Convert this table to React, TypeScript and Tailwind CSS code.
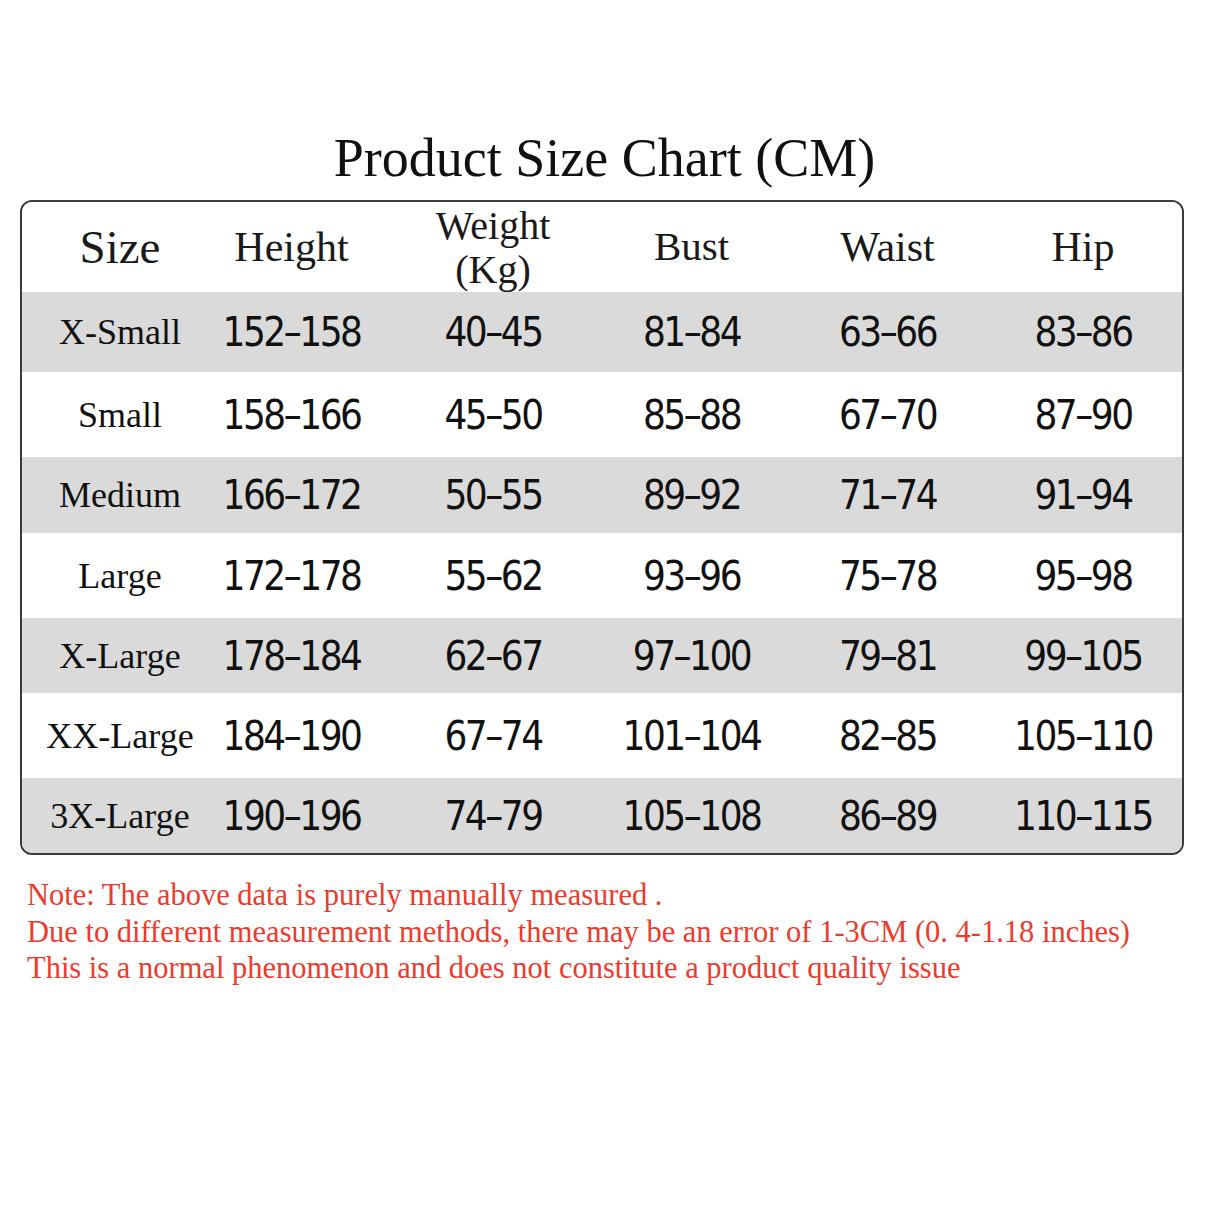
const rows = [
  { size: 'X-Small', h: '152–158', w: '40–45', b: '81–84', wa: '63–66', hip: '83–86', gray: true, height: 'h-[80px]' },
  { size: 'Small', h: '158–166', w: '45–50', b: '85–88', wa: '67–70', hip: '87–90', gray: false, height: 'h-[85px]' },
  { size: 'Medium', h: '166–172', w: '50–55', b: '89–92', wa: '71–74', hip: '91–94', gray: true, height: 'h-[76px]' },
  { size: 'Large', h: '172–178', w: '55–62', b: '93–96', wa: '75–78', hip: '95–98', gray: false, height: 'h-[85px]' },
  { size: 'X-Large', h: '178–184', w: '62–67', b: '97–100', wa: '79–81', hip: '99–105', gray: true, height: 'h-[75px]' },
  { size: 'XX-Large', h: '184–190', w: '67–74', b: '101–104', wa: '82–85', hip: '105–110', gray: false, height: 'h-[85px]' },
  { size: '3X-Large', h: '190–196', w: '74–79', b: '105–108', wa: '86–89', hip: '110–115', gray: true, height: 'h-[75px]' },
]

const serif = "font-['Liberation_Serif',serif]"
const num = "font-['DejaVu_Sans_Condensed','DejaVu_Sans',sans-serif] [font-stretch:condensed] text-[40px] tracking-[-2.5px] text-[#111]"
const cols = 'grid grid-cols-[184px_187px_200px_197px_195px_196px] items-center'

export default function App() {
  return (
    <div className="w-[1206px] h-[1206px] bg-white pt-[128px] px-[20px]">
      <h1 className={`${serif} text-center text-[54px] leading-[60px] text-[#111] pl-[3px]`}>
        Product Size Chart (CM)
      </h1>

      <div className="mt-[12px] w-[1164px] border-2 border-[#3a3a3a] rounded-[12px] overflow-hidden">
        {/* Header */}
        <div className={`${cols} ${serif} h-[90px] bg-white text-[#1a1a1a] text-center`}>
          <div className="pl-3 text-[47px]">Size</div>
          <div className="pr-4 text-[42px]">Height</div>
          <div className="text-[40px] leading-[44px] pt-[2px]">
            Weight
            <br />
            (Kg)
          </div>
          <div className="text-[41px]">Bust</div>
          <div className="text-[42px]">Waist</div>
          <div className="text-[42px]">Hip</div>
        </div>

        {rows.map((r) => (
          <div
            key={r.size}
            className={`${cols} ${r.height} text-center ${r.gray ? 'bg-[#dadada]' : 'bg-white'}`}
          >
            <div className={`${serif} pl-3 text-[36px] text-[#111]`}>{r.size}</div>
            <div className={`${num} pr-4`}>{r.h}</div>
            <div className={num}>{r.w}</div>
            <div className={num}>{r.b}</div>
            <div className={num}>{r.wa}</div>
            <div className={num}>{r.hip}</div>
          </div>
        ))}
      </div>

      <div className={`${serif} mt-[22px] pl-[7px] text-[30.5px] leading-[36.5px] text-[#ec3b2c]`}>
        <p>Note: The above data is purely manually measured .</p>
        <p>Due to different measurement methods, there may be an error of 1-3CM (0. 4-1.18 inches)</p>
        <p>This is a normal phenomenon and does not constitute a product quality issue</p>
      </div>
    </div>
  )
}
